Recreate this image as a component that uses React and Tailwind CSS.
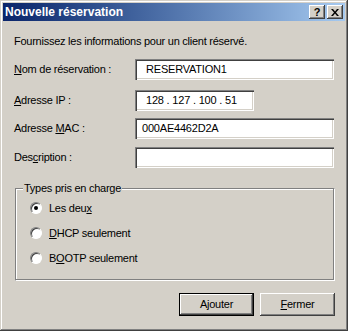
const FONT = { fontFamily: '"Liberation Sans", Arial, sans-serif' };

function Field({ label, value, width = "w-[199px]", className = "", textPad = "pl-[11px]" }) {
  return (
    <div className={`flex items-center ${className}`}>
      <div className="w-[121px] text-[11px] tracking-[-0.25px] text-black">{label}</div>
      <div
        className={`${width} h-[21px] bg-white flex items-center ${textPad} text-[11px] tracking-[-0.2px] text-black shadow-[inset_1px_1px_#808080,inset_2px_2px_#404040,inset_-1px_-1px_#ffffff,inset_-2px_-2px_#d4d0c8]`}
      >
        {value}
      </div>
    </div>
  );
}

function Radio({ checked, children }) {
  return (
    <div className="flex items-center h-[14px]">
      <div className="ml-[14px] w-3 h-3 rounded-full bg-white border border-t-[#808080] border-l-[#808080] border-b-[#ffffff] border-r-[#ffffff] flex items-center justify-center shadow-[inset_1px_1px_#404040]">
        {checked && <div className="w-1 h-1 rounded-full bg-black" />}
      </div>
      <span className="ml-[7px] text-[11px] tracking-[-0.25px] text-black">{children}</span>
    </div>
  );
}

function TitleButton({ children }) {
  return (
    <div className="w-4 h-[14px] bg-[#d4d0c8] flex items-center justify-center text-[11px] font-bold text-black leading-none shadow-[inset_-1px_-1px_#404040,inset_1px_1px_#ffffff,inset_-2px_-2px_#808080]">
      {children}
    </div>
  );
}

export default function App() {
  return (
    <div
      style={FONT}
      className="w-[348px] h-[331px] bg-[#d4d0c8] p-[3px] flex flex-col shadow-[inset_-1px_-1px_#404040,inset_1px_1px_#d4d0c8,inset_-2px_-2px_#808080,inset_2px_2px_#ffffff]"
    >
      <div className="h-[18px] flex items-center pl-[2px] pr-[2px] bg-gradient-to-r from-[#0a246a] to-[#a6caf0]">
        <span className="text-white text-[12px] font-bold">Nouvelle réservation</span>
        <div className="ml-auto flex gap-[2px]">
          <TitleButton>?</TitleButton>
          <TitleButton>
            <svg width="8" height="7" viewBox="0 0 8 7">
              <path d="M0 0h2l2 2.5L6 0h2L5 3.5 8 7H6L4 4.5 2 7H0l3-3.5z" fill="#000" />
            </svg>
          </TitleButton>
        </div>
      </div>

      <div className="flex-1 flex flex-col pl-[11px]">
        <div className="mt-[13px] h-[14px] leading-[14px] text-[11px] tracking-[-0.25px] text-black">
          Fournissez les informations pour un client réservé.
        </div>

        <Field
          className="mt-[11px]"
          label={<><u>N</u>om de réservation :</>}
          value="RESERVATION1"
        />
        <Field
          className="mt-[10px]"
          label={<><u>A</u>dresse IP :</>}
          value="128 . 127 . 100 . 51"
          width="w-[119px]"
        />
        <Field
          className="mt-[7px]"
          label={<>Adresse <u>M</u>AC :</>}
          value="000AE4462D2A"
          textPad="pl-[7px]"
        />
        <Field
          className="mt-[8px]"
          label={<>Des<u>c</u>ription :</>}
          value=""
        />

        <div className="relative mt-[20px] ml-[1px] w-[320px] h-[93px] border border-t-[#808080] border-l-[#808080] border-b-[#ffffff] border-r-[#ffffff] shadow-[inset_1px_1px_#ffffff]">
          <div className="absolute inset-0 border-b border-r border-[#808080] pointer-events-none" />
          <span className="absolute -top-[8px] left-[7px] px-[1px] bg-[#d4d0c8] text-[11px] tracking-[-0.25px] leading-[14px] text-black">
            Types pris en charge
          </span>
          <div className="flex flex-col gap-[11px] mt-[12px]">
            <Radio checked>Les deu<u>x</u></Radio>
            <Radio><u>D</u>HCP seulement</Radio>
            <Radio>B<u>O</u>OTP seulement</Radio>
          </div>
        </div>

        <div className="mt-[12px] flex justify-end gap-[6px] pr-[10px]">
          <div className="w-[75px] h-[23px] border border-black bg-[#d4d0c8] flex items-center justify-center text-[11px] tracking-[-0.25px] text-black shadow-[inset_-1px_-1px_#404040,inset_1px_1px_#ffffff,inset_-2px_-2px_#808080]">
            Ajouter
          </div>
          <div className="w-[75px] h-[23px] bg-[#d4d0c8] flex items-center justify-center text-[11px] tracking-[-0.25px] text-black shadow-[inset_-1px_-1px_#404040,inset_1px_1px_#ffffff,inset_-2px_-2px_#808080]">
            <span><u>F</u>ermer</span>
          </div>
        </div>
      </div>
    </div>
  );
}
